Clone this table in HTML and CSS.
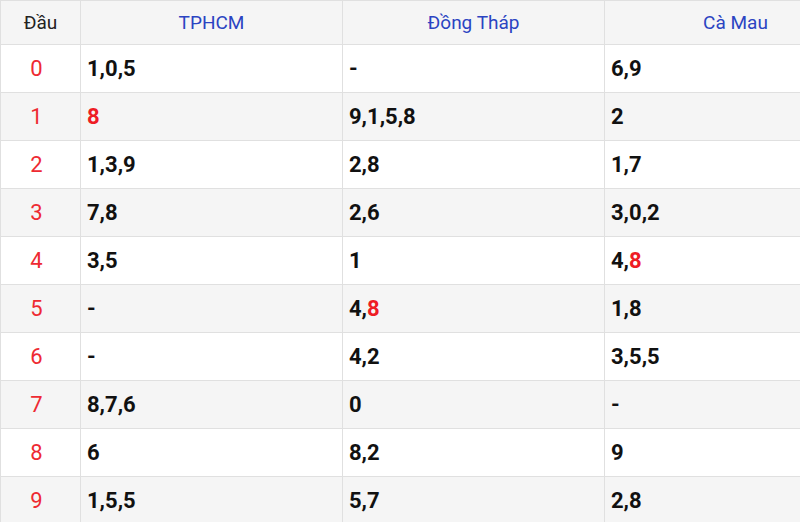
FILE: index.html
```html
<!DOCTYPE html>
<html lang="vi">
<head>
<meta charset="utf-8">
<link rel="stylesheet" href="styles.css">
</head>
<body>
<table class="loto">
  <colgroup>
    <col class="c-head"><col class="c-prov"><col class="c-prov"><col class="c-prov">
  </colgroup>
  <thead>
    <tr><th class="h-dau">Đầu</th><th>TPHCM</th><th>Đồng Tháp</th><th>Cà Mau</th></tr>
  </thead>
  <tbody>
    <tr><td class="dau">0</td><td>1,0,5</td><td>-</td><td>6,9</td></tr>
    <tr><td class="dau">1</td><td><span class="hot">8</span></td><td>9,1,5,8</td><td>2</td></tr>
    <tr><td class="dau">2</td><td>1,3,9</td><td>2,8</td><td>1,7</td></tr>
    <tr><td class="dau">3</td><td>7,8</td><td>2,6</td><td>3,0,2</td></tr>
    <tr><td class="dau">4</td><td>3,5</td><td>1</td><td>4,<span class="hot">8</span></td></tr>
    <tr><td class="dau">5</td><td>-</td><td>4,<span class="hot">8</span></td><td>1,8</td></tr>
    <tr><td class="dau">6</td><td>-</td><td>4,2</td><td>3,5,5</td></tr>
    <tr><td class="dau">7</td><td>8,7,6</td><td>0</td><td>-</td></tr>
    <tr><td class="dau">8</td><td>6</td><td>8,2</td><td>9</td></tr>
    <tr><td class="dau">9</td><td>1,5,5</td><td>5,7</td><td>2,8</td></tr>
  </tbody>
</table>
</body>
</html>
```
FILE: styles.css
```css
html, body {
  margin: 0;
  padding: 0;
  background: #fff;
  overflow: hidden;
}
body {
  font-family: Roboto, "Noto Sans", sans-serif;
  color: #111;
}
.loto {
  border-collapse: collapse;
  table-layout: fixed;
  width: 866px;
}
.c-head { width: 80px; }
.c-prov { width: 262px; }
.loto th, .loto td {
  border: 1px solid #e0e0e0;
  padding: 0 6px;
}
.loto th {
  height: 43px;
  background: #f5f5f5;
  font-weight: 400;
  font-size: 19px;
  line-height: 20px;
  color: #2b44c2;
  text-align: center;
  vertical-align: middle;
}
.loto th.h-dau {
  color: #222;
}
.loto td {
  height: 47px;
  font-size: 22px;
  line-height: 24px;
  font-weight: 700;
  color: #111;
  text-align: left;
}
.loto td.dau {
  font-weight: 400;
  color: #ee2a32;
  text-align: center;
  padding-right: 14px;
}
.loto tbody tr:nth-child(even) {
  background: #f5f5f5;
}
.hot {
  color: #ee1c25;
}
```
